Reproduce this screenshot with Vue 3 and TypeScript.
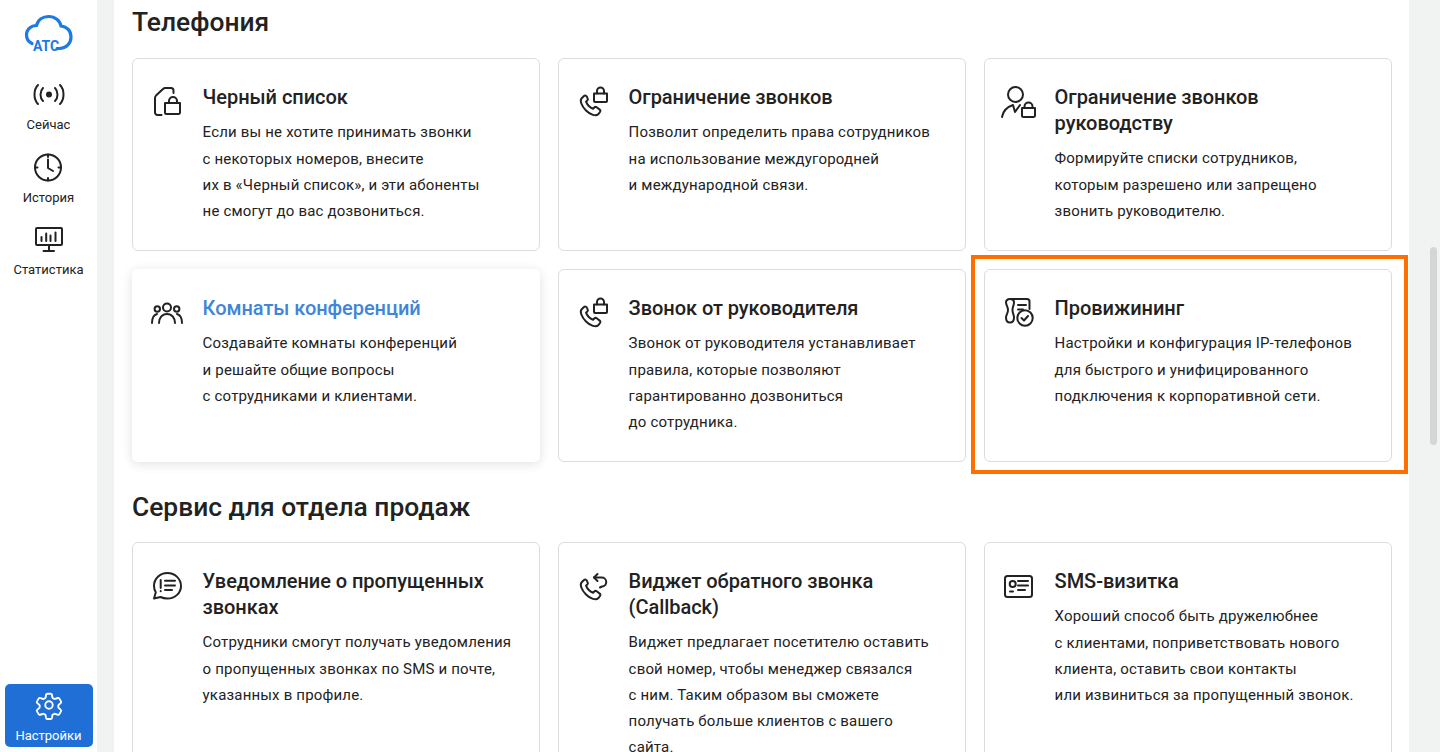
<script setup lang="ts">
interface Card {
  icon: string
  title: string
  lines: string[]
  hovered?: boolean
  marked?: boolean
}
interface Section {
  name: string
  cards: Card[]
}

const nav = [
  { icon: 'live', label: 'Сейчас' },
  { icon: 'clock', label: 'История' },
  { icon: 'stats', label: 'Статистика' },
]

const sections: Section[] = [
  {
    name: 'Телефония',
    cards: [
      { icon: 'sim', title: 'Черный список', lines: ['Если вы не хотите принимать звонки', 'с некоторых номеров, внесите', 'их в «Черный список», и эти абоненты', 'не смогут до вас дозвониться.'] },
      { icon: 'phoneLock', title: 'Ограничение звонков', lines: ['Позволит определить права сотрудников', 'на использование междугородней', 'и международной связи.'] },
      { icon: 'userLock', title: 'Ограничение звонков руководству', lines: ['Формируйте списки сотрудников,', 'которым разрешено или запрещено', 'звонить руководителю.'] },
      { icon: 'team', title: 'Комнаты конференций', hovered: true, lines: ['Создавайте комнаты конференций', 'и решайте общие вопросы', 'с сотрудниками и клиентами.'] },
      { icon: 'phoneLock', title: 'Звонок от руководителя', lines: ['Звонок от руководителя устанавливает', 'правила, которые позволяют', 'гарантированно дозвониться', 'до сотрудника.'] },
      { icon: 'scroll', title: 'Провижининг', marked: true, lines: ['Настройки и конфигурация IP-телефонов', 'для быстрого и унифицированного', 'подключения к корпоративной сети.'] },
    ],
  },
  {
    name: 'Сервис для отдела продаж',
    cards: [
      { icon: 'chat', title: 'Уведомление о пропущенных звонках', lines: ['Сотрудники смогут получать уведомления', 'о пропущенных звонках по SMS и почте,', 'указанных в профиле.'] },
      { icon: 'callback', title: 'Виджет обратного звонка (Callback)', lines: ['Виджет предлагает посетителю оставить', 'свой номер, чтобы менеджер связался', 'с ним. Таким образом вы сможете', 'получать больше клиентов с вашего', 'сайта.'] },
      { icon: 'idcard', title: 'SMS-визитка', lines: ['Хороший способ быть дружелюбнее', 'с клиентами, поприветствовать нового', 'клиента, оставить свои контакты', 'или извиниться за пропущенный звонок.'] },
    ],
  },
]

const phone = 'M6 12 3.700 14.300C1.500 16.500 3.500 22 8 26.500 12.500 31 18 32.500 20.200 30.300L22 28c.6-.8.5-1.800-.3-2.400l-3-2.300c-.8-.6-1.700-.5-2.400.2l-1.200 1.200c-1.700-.6-3.100-1.500-4.300-2.700-1.300-1.200-2.200-2.700-2.800-4.300l1.300-1.200c.7-.7.8-1.600.2-2.400C8.500 11 6.900 11.200 6 12Z'

const iconPaths: Record<string, string[]> = {
  sim: ['M9.500 31H5.500A2.500 2.500 0 0 1 3 28.500V14c0-1 .4-1.800 1-2.400L11 5c.6-.6 1.400-1 2.300-1H19c1.500 0 2.500 1 2.500 2.500V9', 'M13 19h15v9.500a1.500 1.500 0 0 1-1.500 1.500h-12a1.500 1.500 0 0 1-1.500-1.500V19Z', 'M17 19v-2a4 4 0 0 1 8 0v2'],
  phoneLock: [phone, 'M16 9.500h13v7.500a1 1 0 0 1-1 1H17a1 1 0 0 1-1-1V9.500Z', 'M19 9.500V7a3.500 3.500 0 0 1 7 0v2.500'],
  userLock: ['M11.500 18a7.500 7.500 0 1 0 0-15 7.500 7.500 0 0 0 0 15Z', 'M-2 33C-1 27 3 23 9 21l2 7 5-7', 'M18 24h13v7.500a1.500 1.500 0 0 1-1.500 1.500h-10a1.500 1.500 0 0 1-1.500-1.500V24Z', 'M20.500 24v-1.500a4 4 0 0 1 8 0V24'],
  team: ['M15 16.500a4 4 0 1 0 0-8 4 4 0 0 0 0 8Z', 'M5.300 16.700a2.700 2.700 0 1 0 0-5.400 2.700 2.700 0 0 0 0 5.400Z', 'M24.700 16.700a2.700 2.700 0 1 0 0-5.400 2.700 2.700 0 0 0 0 5.400Z', 'M7 28c0-5 3-9 8-9s8 4 8 9', 'M0 28c0-4 1.500-8 5-9', 'M30 28c0-4-1.500-8-5-9'],
  scroll: ['M6 4h17c1.500 0 2.500 1 2.500 2.500V14', 'M6 4C3.500 4 2 5.500 2 7.500c0 3 2 4 2 7.500s-2 4.500-2 7.500c0 3 1.500 5 4 5s4-2 4-5c0-3-1.500-4-1.500-7.500S10 10.500 10 7.500C10 5.500 8.500 4 6 4Z', 'M14 10h8M14 14.500h5', 'M21 30.700a7.700 7.700 0 1 0 0-15.400 7.700 7.700 0 0 0 0 15.400Z', 'M17.500 23l2.500 2.500 4-4.500'],
  chat: ['M15.500 5C8 5 2 10.500 2 18c0 2.500.7 4.500 1.800 6.300L2 30.500l6.500-1.500c2 1 4.500 1.500 7 1.500 7.500 0 13.500-5.500 13.500-12.500S23 5 15.500 5Z', 'M8.700 12v8', 'M8.700 23v.2', 'M13 12.700h10M13 17.500h10M13 22h7'],
  callback: [phone, 'M16 9.500h7.500a4.500 4.500 0 0 1 .5 9l-2 1', 'M19.500 6 16 9.500l3.500 3.500'],
  idcard: ['M3.500 8h22A2.500 2.500 0 0 1 28 10.500v16a2.500 2.500 0 0 1-2.500 2.500h-22A2.500 2.500 0 0 1 1 26.500v-16A2.500 2.500 0 0 1 3.500 8Z', 'M8.700 19a3 3 0 1 0 0-6 3 3 0 0 0 0 6Z', 'M14 13h10M14 17.500h10M14 22h7M6 23.500h3'],
  live: ['M5 7C2.500 9.500 1.500 13 1.500 16.500S2.500 23.500 5 26', 'M27 7c2.500 2.500 3.500 6 3.500 9.500S29.500 23.500 27 26', 'M10 10c-1.500 1.500-2.500 4-2.500 6.500s1 5 2.500 6.500', 'M22 10c1.500 1.500 2.500 4 2.500 6.500s-1 5-2.500 6.500'],
  clock: ['M16 29.500a13 13 0 1 0 0-26 13 13 0 0 0 0 26Z', 'M16 3.500v2.500M16 27v2.500M3 16.500h2.500M26.500 16.500H29', 'M16 8.500v8.500l5 3'],
  stats: ['M4 5h24a1 1 0 0 1 1 1v15a1 1 0 0 1-1 1H4a1 1 0 0 1-1-1V6a1 1 0 0 1 1-1Z', 'M16 22v6M10.500 28H21', 'M8.500 14v4M13.200 10.500V18M17.500 12.500V18M22.500 9.500V18'],
}
</script>

<template>
  <div class="page">
    <aside class="rail">
      <svg class="logo" width="50" height="40" viewBox="0 0 50 40" fill="none">
        <path d="M8 29.500C4.500 28 2.500 24.500 2.500 21 2.500 15.500 7 11.500 12.500 11.500 14 5.500 19 2.500 24.500 2.500 31 2.500 36 6.500 37 12 43 12.500 47 17 47 23 47 29.500 42 34.500 35.500 34.500H33" stroke="#1c7ae4" stroke-width="3.200" stroke-linecap="round"/>
        <text x="9" y="37" class="logo-text">АТС</text>
      </svg>
      <a v-for="item in nav" :key="item.label" class="nav-item">
        <svg width="32" height="32" viewBox="0 0 32 32" fill="none" stroke="#222" stroke-width="2" stroke-linecap="round" stroke-linejoin="round">
          <path v-for="d in iconPaths[item.icon]" :key="d" :d="d" />
          <circle v-if="item.icon === 'live'" cx="16" cy="16.500" r="3" fill="#222" stroke="none" />
        </svg>
        <span>{{ item.label }}</span>
      </a>
      <a class="nav-item settings">
        <svg width="30" height="30" viewBox="0 0 24 24" fill="none" stroke="#fff" stroke-width="1.500" stroke-linecap="round" stroke-linejoin="round">
          <path d="M9.600 3.900c.1-.5.600-.9 1.100-.9h2.600c.5 0 1 .4 1.100.9l.2 1.700c.1.500.4.900.8 1.100l.6.300c.4.200.9.200 1.300 0l1.600-.6c.5-.2 1.100 0 1.400.5l1.300 2.200c.3.500.1 1.100-.3 1.400l-1.300 1.100c-.4.300-.6.700-.6 1.200v.6c0 .5.200.9.600 1.200l1.300 1.100c.4.300.6.900.3 1.400l-1.300 2.200c-.3.500-.9.700-1.400.5l-1.600-.6c-.4-.2-.9-.2-1.300 0l-.6.300c-.4.200-.7.600-.8 1.100l-.2 1.700c-.1.500-.6.900-1.100.9h-2.600c-.5 0-1-.4-1.100-.9l-.2-1.700c-.1-.5-.4-.9-.8-1.100l-.6-.3c-.4-.2-.9-.2-1.300 0l-1.600.6c-.5.200-1.100 0-1.400-.5l-1.300-2.200c-.3-.5-.1-1.100.3-1.400l1.300-1.100c.4-.3.6-.7.6-1.200v-.6c0-.5-.2-.9-.6-1.200l-1.300-1.100c-.4-.3-.6-.9-.3-1.400l1.300-2.200c.3-.5.900-.7 1.400-.5l1.600.6c.4.200.9.200 1.300 0l.6-.3c.4-.2.7-.6.800-1.100l.2-1.700Z" />
          <circle cx="12" cy="12" r="3" />
        </svg>
        <span>Настройки</span>
      </a>
    </aside>

    <main class="content">
      <section v-for="section in sections" :key="section.name" class="section">
        <h2>{{ section.name }}</h2>
        <div class="grid">
          <article
            v-for="card in section.cards"
            :key="card.title"
            class="card"
            :class="{ hovered: card.hovered, marked: card.marked }"
          >
            <svg class="card-icon" width="32" height="32" viewBox="0 0 32 32" fill="none" stroke="#222" stroke-width="2" stroke-linecap="round" stroke-linejoin="round">
              <path v-for="d in iconPaths[card.icon]" :key="d" :d="d" />
            </svg>
            <div class="card-body">
              <h3>{{ card.title }}</h3>
              <p>
                <span v-for="line in card.lines" :key="line">{{ line }}</span>
              </p>
            </div>
          </article>
        </div>
      </section>
    </main>

    <div class="scroll-track">
      <div class="scroll-thumb"></div>
    </div>
  </div>
</template>

<style>
html,
body {
  margin: 0;
  overflow: hidden;
}
</style>

<style scoped>
.page {
  display: flex;
  height: 752px;
  overflow: hidden;
  background: #f1f3f3;
  font-family: Roboto, "Liberation Sans", sans-serif;
  color: #222;
}
.rail {
  flex: 0 0 97px;
  box-sizing: border-box;
  height: 752px;
  background: #fff;
  display: flex;
  flex-direction: column;
  align-items: center;
  padding: 14px 0 5px;
}
.logo {
  margin-bottom: 24px;
}
.logo-text {
  font-size: 14px;
  font-weight: 700;
  fill: #1c7ae4;
}
.nav-item {
  display: flex;
  flex-direction: column;
  align-items: center;
  font-size: 13px;
  line-height: 16px;
  margin-bottom: 17.5px;
  gap: 7px;
}
.settings {
  box-sizing: border-box;
  width: 88px;
  height: 63px;
  margin: auto 0 0;
  padding: 6px 0 0;
  gap: 8px;
  background: #1f6fd6;
  border-radius: 5px;
  color: #fff;
}
.content {
  flex: 0 0 1295px;
  box-sizing: border-box;
  height: 752px;
  margin-left: 17px;
  padding: 0 17px 0 18px;
  background: #fff;
  overflow: hidden;
}
.section h2 {
  margin: 0;
  padding: 5px 0 18px;
  font-size: 26.4px;
  line-height: 35px;
  font-weight: 500;
  color: #222;
}
.section + .section h2 {
  padding: 27px 0 17px;
  line-height: 36px;
}
.grid {
  display: grid;
  grid-template-columns: repeat(3, 408px);
  gap: 18px;
}
.card {
  position: relative;
  box-sizing: border-box;
  min-height: 193px;
  display: flex;
  gap: 18.6px;
  padding: 25px 20px 20px 19px;
  background: #fff;
  border: 1px solid #dcdcdc;
  border-radius: 6px;
}
.card-icon {
  flex: none;
  overflow: visible;
}
.card-body h3 {
  margin: 0 0 9.3px;
  font-size: 20px;
  line-height: 26px;
  font-weight: 500;
  letter-spacing: -0.05px;
  color: #222;
}
.card-body p {
  margin: 0;
  font-size: 15px;
  line-height: 26.3px;
  letter-spacing: 0.18px;
  color: #222;
}
.card-body span {
  display: block;
  white-space: nowrap;
}
.hovered {
  border-color: transparent;
  box-shadow: 0 2px 12px rgba(0, 0, 0, 0.12);
}
.hovered h3 {
  color: #3f85d8;
}
.marked::after {
  content: "";
  position: absolute;
  inset: -15px -17px -13px -14px;
  border: 4px solid #ff6f00;
  pointer-events: none;
}
.scroll-track {
  flex: 1;
  position: relative;
}
.scroll-thumb {
  position: absolute;
  top: 247px;
  left: 21px;
  width: 7px;
  height: 198px;
  border-radius: 4px;
  background: #d5d5d5;
}
</style>
